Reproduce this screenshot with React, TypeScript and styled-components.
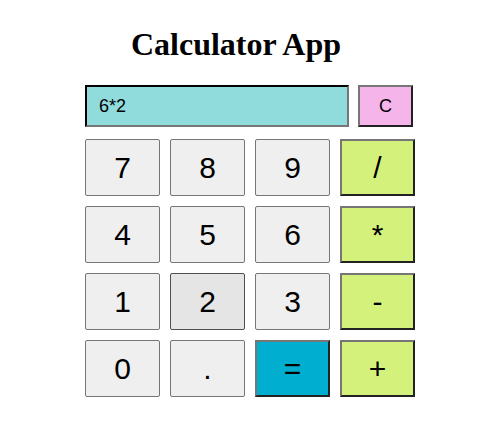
import React, { FunctionComponent, useState } from 'react';
import styled, { createGlobalStyle } from 'styled-components';

const GlobalStyle = createGlobalStyle`
    body {
        margin: 8px;
        background-color: #fff;
        font-family: "Liberation Serif", serif;
    }
`;

const StyledWrapper = styled.div`
    width: 330px;
    margin: 0 auto;
    padding-left: 4px;
    display: flex;
    flex-direction: column;
`;

const StyledTitle = styled.h1`
    margin: 18px 0 22px 0;
    padding-right: 28px;
    text-align: center;
    font-family: "Liberation Serif", serif;
    font-size: 32px;
    font-weight: bold;
    color: #000;
`;

const StyledDisplayRow = styled.div`
    display: flex;
    gap: 9px;
    margin-bottom: 12px;
`;

const StyledDisplay = styled.input`
    width: 264px;
    height: 42px;
    box-sizing: border-box;
    padding: 0 12px;
    font-family: "Liberation Sans", Arial, sans-serif;
    font-size: 18px;
    color: #000;
    background-color: #90dcdc;
    border: 2px inset #767676;
    border-color: #222 #767676 #767676 #222;
    outline: none;
`;

const StyledClear = styled.button`
    width: 55px;
    height: 42px;
    box-sizing: border-box;
    padding: 0;
    font-family: "Liberation Sans", Arial, sans-serif;
    font-size: 18px;
    color: #000;
    background-color: #f5b5ea;
    border: 2px solid;
    border-color: #767676 #222 #222 #767676;
`;

const StyledKeypad = styled.div`
    display: grid;
    grid-template-columns: repeat(4, 75px);
    grid-auto-rows: 57px;
    gap: 10px;
`;

const StyledKey = styled.button<{ kind: 'digit' | 'op' | 'equals'; hovered?: boolean }>`
    box-sizing: border-box;
    padding: 0;
    font-family: "Liberation Sans", Arial, sans-serif;
    font-size: 30px;
    color: #000;
    border-radius: ${({ kind }) => (kind === 'digit' ? '2px' : '0')};
    background-color: ${({ kind, hovered }) =>
        kind === 'op' ? '#d4f27b' : kind === 'equals' ? '#00afcf' : hovered ? '#e5e5e5' : '#efefef'};
    border: ${({ kind }) => (kind === 'digit' ? '1px solid' : '2px solid')};
    border-color: ${({ kind, hovered }) =>
        kind === 'digit' ? (hovered ? '#4f4f4f' : '#767676') : '#767676 #222 #222 #767676'};
    cursor: pointer;
`;

const keys: { label: string; kind: 'digit' | 'op' | 'equals' }[] = [
    { label: '7', kind: 'digit' },
    { label: '8', kind: 'digit' },
    { label: '9', kind: 'digit' },
    { label: '/', kind: 'op' },
    { label: '4', kind: 'digit' },
    { label: '5', kind: 'digit' },
    { label: '6', kind: 'digit' },
    { label: '*', kind: 'op' },
    { label: '1', kind: 'digit' },
    { label: '2', kind: 'digit' },
    { label: '3', kind: 'digit' },
    { label: '-', kind: 'op' },
    { label: '0', kind: 'digit' },
    { label: '.', kind: 'digit' },
    { label: '=', kind: 'equals' },
    { label: '+', kind: 'op' },
];

const App: FunctionComponent = () => {
    const [input, setInput] = useState<string>('6*2');

    const handleKey = (label: string) => {
        if (label === '=') {
            try {
                // eslint-disable-next-line no-new-func
                setInput(String(Function(`return (${input})`)()));
            } catch (e) {
                setInput('Error');
            }
        } else {
            setInput(input + label);
        }
    };

    return (
        <>
            <GlobalStyle />
            <StyledWrapper>
                <StyledTitle>Calculator App</StyledTitle>
                <StyledDisplayRow>
                    <StyledDisplay type="text" value={input} readOnly />
                    <StyledClear onClick={() => setInput('')}>C</StyledClear>
                </StyledDisplayRow>
                <StyledKeypad>
                    {keys.map(key => (
                        <StyledKey
                            key={key.label}
                            kind={key.kind}
                            hovered={key.label === '2'}
                            onClick={() => handleKey(key.label)}
                        >
                            {key.label}
                        </StyledKey>
                    ))}
                </StyledKeypad>
            </StyledWrapper>
        </>
    );
};

export default App;
